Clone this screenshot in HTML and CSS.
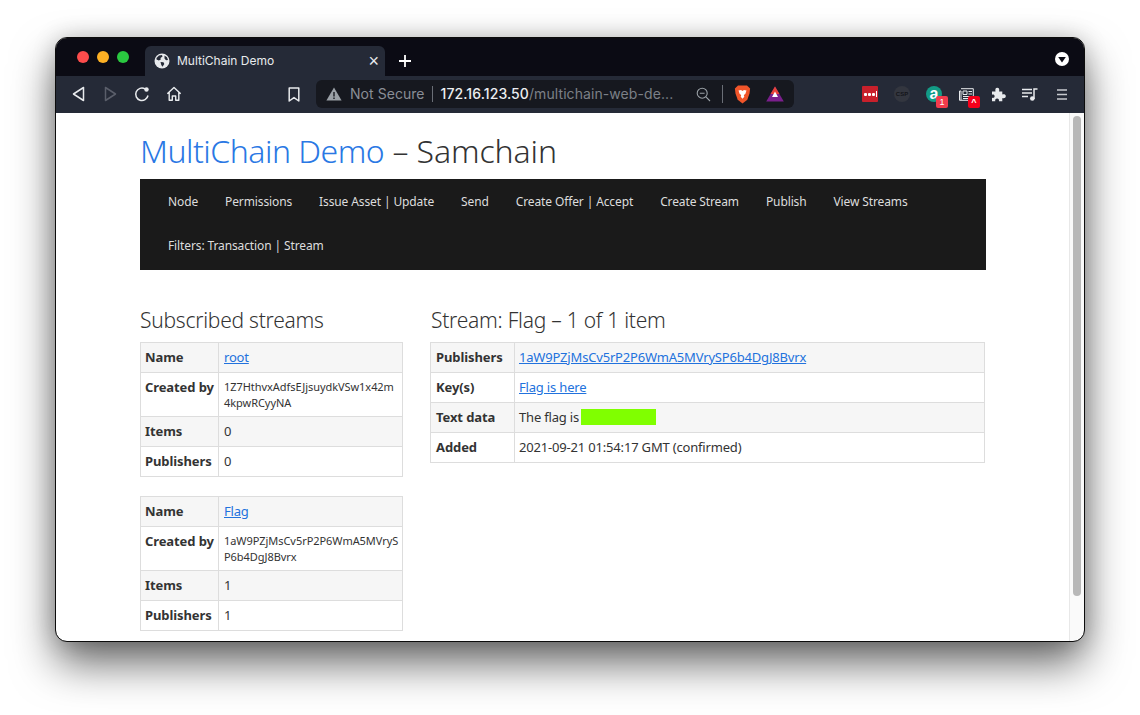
FILE: index.html
```html
<!DOCTYPE html>
<html lang="en">
<head>
<meta charset="utf-8">
<title>MultiChain Demo</title>
<link rel="stylesheet" href="styles.css">
</head>
<body>
<div class="window">
  <div class="titlebar">
    <div class="lights"><span class="light red"></span><span class="light amber"></span><span class="light green"></span></div>
    <div class="tab">
      <svg class="globe" width="16" height="16" viewBox="0 0 16 16"><circle cx="8" cy="8" r="7.5" fill="#e8eaed"/><path d="M5 2.500 8 2 8.500 3.500 6.500 5 6.800 6.500 4.800 7.500 2.500 6.500 2.500 5ZM6.500 9 9.500 9.300 10.300 11 8.500 13.800 7.300 12ZM10.500 2.500 13 4.200 14 7 12 7.300 10.500 5.500Z" fill="#252a37"/></svg>
      <span class="tab-title">MultiChain Demo</span>
      <span class="tab-close">×</span>
    </div>
    <svg class="newtab" width="12" height="12" viewBox="0 0 12 12"><path d="M6 0V12M0 6H12" stroke="#fff" stroke-width="1.8"/></svg>
    <svg class="tabmenu" width="16" height="16" viewBox="0 0 16 16"><circle cx="8" cy="8" r="7" fill="#fff"/><path d="M4.2 6H11.8L8 11.4Z" fill="#0b0b14"/></svg>
  </div>
  <div class="toolbar">
    <div class="nav-icons">
      <svg width="14" height="16" viewBox="0 0 14 16"><path d="M11.5 1.500V14.500L1.500 8Z" fill="none" stroke="#e8eaed" stroke-width="1.500" stroke-linejoin="round"/></svg>
      <svg width="14" height="16" viewBox="0 0 14 16"><path d="M2.500 1.500V14.500L12.500 8Z" fill="none" stroke="#5a5e6a" stroke-width="1.500" stroke-linejoin="round"/></svg>
      <svg width="16" height="16" viewBox="0 0 16 16"><path d="M14 9.500A6.200 6.200 0 1 1 11 2.900" fill="none" stroke="#e8eaed" stroke-width="1.500"/><circle cx="12.500" cy="3.500" r="2.200" fill="#e8eaed"/></svg>
      <svg class="home" width="16" height="16" viewBox="0 0 16 16"><path d="M1.300 7.800 8 1.600 14.700 7.800M3.200 6.600V14.200H6.300V10H9.700V14.200H12.800V6.600" fill="none" stroke="#e8eaed" stroke-width="1.400" stroke-linejoin="round"/></svg>
    </div>
    <svg class="bookmark" width="12" height="15" viewBox="0 0 12 15"><path d="M1.200 1H10.800V14L6 10.600 1.200 14Z" fill="none" stroke="#e8eaed" stroke-width="1.500" stroke-linejoin="round"/></svg>
    <div class="omnibox">
      <svg class="warn" width="16" height="14" viewBox="0 0 16 14"><path d="M8 .5 15.600 13.500H.4Z" fill="#9aa0a6"/><path d="M7.300 5H8.700V9.500H7.300ZM7.300 10.500H8.700V12H7.300Z" fill="#16181f"/></svg>
      <span class="not-secure">Not Secure</span>
      <span class="omni-sep"></span>
      <span class="url"><b>172.16.123.50</b>/multichain-web-de...</span>
      <svg class="zoom-out" width="15" height="15" viewBox="0 0 15 15"><circle cx="6.200" cy="6.200" r="5" fill="none" stroke="#9aa0a6" stroke-width="1.100"/><path d="M3.800 6.200H8.600M9.900 9.900 14 14" stroke="#9aa0a6" stroke-width="1.100"/></svg>
      <span class="omni-sep tall"></span>
      <svg class="brave" width="17" height="19" viewBox="0 0 16 19"><path d="M3.500.6H12.500L15.600 3.600 15 8.500 12.800 14.800 8 18.400 3.200 14.800 1 8.500.4 3.600Z" fill="#f0552a"/><path d="M4 5.500 6.500 5 8 6 9.500 5 12 5.500 10.800 9 9.300 10 9.800 11.800 8 13.800 6.200 11.800 6.700 10 5.200 9Z" fill="#fff"/></svg>
      <svg class="bat" width="18" height="16" viewBox="0 0 18 16"><path d="M9 .5 17.800 15.500H.2Z" fill="#7a1f8c"/><path d="M9 .5 13.500 8H4.500Z" fill="#e8433a"/><path d="M9 5.500 12 11H6Z" fill="#fff"/></svg>
    </div>
    <div class="ext-icons">
      <span class="ext ext-lastpass"><i></i><i></i><i></i><em></em></span>
      <span class="ext ext-csp">CSP</span>
      <span class="ext ext-a">a<span class="badge badge-one">1</span></span>
      <span class="ext ext-news">
        <svg width="16" height="13" viewBox="0 0 16 13"><path d="M3 .7H15.300V12.300H1.500V3H3V12" fill="none" stroke="#e8eaed" stroke-width="1"/><path d="M5 3H9V6.500H5Z" fill="none" stroke="#e8eaed" stroke-width="1"/><path d="M10.500 3.500H14M10.500 6H14M5 8.500H14M5 10.500H14" stroke="#e8eaed" stroke-width="1"/></svg>
        <span class="badge badge-up">^</span>
      </span>
      <svg class="ext ext-puzzle" width="15" height="15" viewBox="0 0 15 15"><path d="M1 4.500H4.500C4 2.500 4.500 .8 6.300 .8S8.600 2.500 8.100 4.500H11.300V7.500C13.200 7 14.800 7.600 14.800 9.300S13.200 11.600 11.300 11.100V14.300H7.900C8.300 12.700 7.600 11.500 6.100 11.500S3.900 12.700 4.300 14.300H1V10.800C2.600 11.200 3.600 10.500 3.600 9.200S2.600 7.300 1 7.700Z" fill="#e8eaed"/></svg>
      <svg class="ext ext-queue" width="16" height="13" viewBox="0 0 16 13"><path d="M0 1.500H10M0 5H10M0 8.500H6" stroke="#e8eaed" stroke-width="1.500"/><path d="M12 11V1H15.500" fill="none" stroke="#e8eaed" stroke-width="1.500"/><circle cx="10.300" cy="10.500" r="2.300" fill="#e8eaed"/></svg>
      <svg class="ext ext-menu" width="10" height="11" viewBox="0 0 10 11"><path d="M0 1H10M0 5.500H10M0 10H10" stroke="#c8cacf" stroke-width="1.500"/></svg>
    </div>
  </div>
  <div class="viewport">
    <main class="page">
      <h1 class="page-title"><a href="#">MultiChain Demo</a> – Samchain</h1>
      <nav class="navbar">
        <ul class="nav-row">
          <li><a href="#">Node</a></li>
          <li><a href="#">Permissions</a></li>
          <li><a href="#">Issue Asset</a> | <a href="#">Update</a></li>
          <li><a href="#">Send</a></li>
          <li><a href="#">Create Offer</a> | <a href="#">Accept</a></li>
          <li><a href="#">Create Stream</a></li>
          <li><a href="#">Publish</a></li>
          <li><a href="#">View Streams</a></li>
        </ul>
        <ul class="nav-row">
          <li>Filters: <a href="#">Transaction</a> | <a href="#">Stream</a></li>
        </ul>
      </nav>
      <div class="columns">
        <section class="col-left">
          <h3 class="section-title">Subscribed streams</h3>
          <table class="info left">
            <tr><th>Name</th><td><a href="#">root</a></td></tr>
            <tr><th>Created by</th><td class="addr">1Z7HthvxAdfsEJjsuydkVSw1x42m<wbr>4kpwRCyyNA</td></tr>
            <tr><th>Items</th><td>0</td></tr>
            <tr><th>Publishers</th><td>0</td></tr>
          </table>
          <table class="info left">
            <tr><th>Name</th><td><a href="#">Flag</a></td></tr>
            <tr><th>Created by</th><td class="addr">1aW9PZjMsCv5rP2P6WmA5MVryS<wbr>P6b4DgJ8Bvrx</td></tr>
            <tr><th>Items</th><td>1</td></tr>
            <tr><th>Publishers</th><td>1</td></tr>
          </table>
        </section>
        <section class="col-right">
          <h3 class="section-title">Stream: Flag – 1 of 1 item</h3>
          <table class="info right">
            <tr><th>Publishers</th><td><a href="#">1aW9PZjMsCv5rP2P6WmA5MVrySP6b4DgJ8Bvrx</a></td></tr>
            <tr><th>Key(s)</th><td><a href="#">Flag is here</a></td></tr>
            <tr><th>Text data</th><td>The flag is <span class="redact"></span></td></tr>
            <tr><th>Added</th><td>2021-09-21 01:54:17 GMT (confirmed)</td></tr>
          </table>
        </section>
      </div>
    </main>
    <div class="scrollbar"><div class="thumb"></div></div>
  </div>
</div>
</body>
</html>
```
FILE: styles.css
```css
* { box-sizing: border-box; }
html, body { margin: 0; height: 100%; }
body {
  background: #fff;
  padding: 38px 56px 74px;
  overflow: hidden;
  font-family: "Noto Sans", "Open Sans", sans-serif;
}
.window {
  width: 1028px;
  height: 603px;
  border-radius: 11px;
  overflow: hidden;
  display: flex;
  flex-direction: column;
  background: #fff;
  outline: 1px solid #0c0c0c;
  box-shadow: 0 22px 44px rgba(0,0,0,.6), 0 0 24px rgba(0,0,0,.2);
}
.titlebar {
  height: 38px;
  flex: none;
  background: #0b0b14;
  display: flex;
  align-items: flex-end;
  padding-left: 21px;
}
.lights { display: flex; gap: 8px; align-self: flex-start; padding-top: 13px; width: 68px; }
.light { width: 12px; height: 12px; border-radius: 50%; }
.red { background: #fc4c4c; }
.amber { background: #fdb024; }
.green { background: #2ac840; }
.tab {
  width: 240px;
  height: 30px;
  background: #252a37;
  border-radius: 6px 6px 0 0;
  display: flex;
  align-items: center;
  padding: 0 6px 0 9px;
  color: #e8eaed;
}
.globe { flex: none; }
.tab-title { font: 12px/1 Inter, sans-serif; margin-left: 7px; flex: 1; color: #e8eaed; }
.tab-close { font: 18px/1 "Liberation Sans", sans-serif; color: #e8eaed; }
.newtab { margin: 0 0 9px 14px; }
.tabmenu { margin: 0 14px 9px auto; }
.toolbar {
  height: 37px;
  flex: none;
  background: #252a37;
  display: flex;
  align-items: center;
  padding: 0 0 1px 16px;
}
.nav-icons { display: flex; align-items: center; gap: 17px; width: 216px; }
.home { margin-left: -1px; }
.bookmark { flex: none; }
.omnibox {
  margin-left: 16px;
  width: 478px;
  height: 28px;
  background: #16181f;
  border-radius: 6px;
  display: flex;
  align-items: center;
  padding-left: 10px;
  font: 14px/1 Inter, sans-serif;
  color: #8a8e96;
}
.warn { flex: none; }
.not-secure { margin-left: 8px; letter-spacing: .05px; }
.omni-sep { width: 1px; height: 16px; background: #6a6e76; margin: 0 8px 0 7px; }
.omni-sep.tall { margin: 0 11px; height: 18px; }
.url { width: 256px; white-space: nowrap; color: #7c8087; letter-spacing: .08px; }
.url b { font-weight: 500; color: #eceef1; }
.zoom-out { flex: none; margin-left: -1px; }
.brave { flex: none; }
.bat { flex: none; margin-left: 15px; }
.ext-icons { display: flex; align-items: center; margin-left: 68px; }
.ext { flex: none; }
.ext-lastpass {
  width: 16px; height: 16px; background: #c8202b; border-radius: 1px;
  display: flex; align-items: center; justify-content: center; gap: 1px;
}
.ext-lastpass i { width: 3px; height: 3px; background: #fff; border-radius: 1px; }
.ext-lastpass em { width: 1px; height: 6px; background: #fff; }
.ext-csp {
  margin-left: 16px; width: 16px; height: 16px; border-radius: 50%;
  background: #33363f; color: #14151a; font: 700 6px/16px "Liberation Sans", sans-serif; text-align: center;
}
.ext-a {
  position: relative; margin-left: 16px; width: 16px; height: 16px; border-radius: 50%;
  background: #139b86; color: #fff; font: 700 16px/15px "Liberation Sans", sans-serif; text-align: center;
}
.badge {
  position: absolute; left: 10px; top: 10px; width: 12px; height: 12px; border-radius: 2px;
  color: #fff; font: 400 9px/12px "Liberation Sans", sans-serif; text-align: center;
}
.badge-one { background: #f23b4c; }
.ext-news { position: relative; margin-left: 16px; width: 16px; height: 16px; display: flex; align-items: center; }
.badge-up { background: #f6001a; left: 10px; top: 10px; font-weight: 700; }
.ext-puzzle { margin-left: 17px; }
.ext-queue { margin-left: 16px; }
.ext-menu { margin-left: 19px; }
.viewport { flex: 1; display: flex; min-height: 0; background: #fff; }
.page { flex: 1; min-width: 0; padding: 0 83px 0 84px; overflow: hidden; color: #333; font-size: 13px; }
.page a { color: #2272dd; }
.page-title {
  margin: 16px 0 6px;
  font: 300 32px/44px "Noto Sans", sans-serif;
  letter-spacing: -.1px;
  color: #333;
}
.page-title a { text-decoration: none; color: #2a78e4; letter-spacing: -.5px; }
.navbar { background: #1a1a1a; height: 91px; padding: 0 13px; font-size: 12px; color: #ddd; letter-spacing: -.12px; }
.nav-row { list-style: none; margin: 0; padding: 0; display: flex; height: 44px; align-items: center; gap: 27px; padding-left: 15px; }
.page .navbar a { color: #ddd; text-decoration: none; }
.columns { display: flex; margin-top: 34px; gap: 27px; }
.col-left { width: 263px; flex: none; }
.col-right { width: 555px; flex: none; }
.section-title { margin: 0 0 6px; font: 300 21px/32px "Noto Sans", sans-serif; letter-spacing: -.25px; color: #333; }
.col-right .section-title { padding-left: 1px; }
.info { width: 100%; border-collapse: collapse; margin-bottom: 19px; font-size: 13px; }
.info th, .info td { border: 1px solid #ddd; padding: 4px; line-height: 21px; vertical-align: top; text-align: left; }
.info th { font-weight: 700; white-space: nowrap; letter-spacing: -.1px; }
.info td { letter-spacing: -.18px; }
.info tr:nth-child(odd) th, .info tr:nth-child(odd) td { background: #f6f6f6; }
.info.left th { width: 78px; padding-right: 3px; }
.info.right th { width: 84px; padding-left: 5px; }
.info.left td { padding-left: 5px; }
.info.right td { padding-left: 4px; }
.info td.addr { font-size: 11px; letter-spacing: -.05px; line-height: 16px; padding-top: 6px; padding-bottom: 5px; padding-right: 2px; }
.redact { display: inline-block; width: 75px; height: 16px; margin-left: -1px; background: #80ff00; vertical-align: -3px; }
.scrollbar { width: 15px; flex: none; background: #fafafa; border-left: 1px solid #e8e8e8; padding: 3px 3px 0 3px; }
.thumb { width: 8px; height: 480px; background: #b8b8b8; border-radius: 4px; }
```
